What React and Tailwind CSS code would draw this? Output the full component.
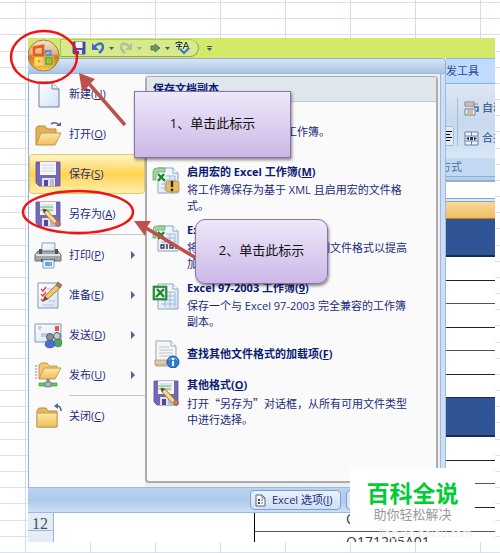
const sans = "font-['Open_Sans','Noto_Sans_CJK_SC',sans-serif]";

const Grid = () => (
  <div aria-hidden="true" className="absolute inset-0 overflow-hidden">
    <div className="absolute inset-0 flex flex-col">
      <div className="h-[3px] shrink-0 border-b border-[#dde0ed]" />
      {Array.from({ length: 34 }, (_, i) => (
        <div key={i} className="flex-1 border-b border-[#dde0ed]" />
      ))}
    </div>
    <div className="absolute inset-0 flex">
      <div className="w-[26px] shrink-0 border-r border-[#d5dceb]" />
      {Array.from({ length: 8 }, (_, i) => (
        <div key={i} className="w-[65px] shrink-0 border-r border-[#d5dceb]" />
      ))}
    </div>
  </div>
);

const Svg = ({ children, className = "size-7" }) => (
  <svg viewBox="0 0 28 28" aria-hidden="true" className={`shrink-0 ${className}`}>
    <defs>
      <linearGradient id="folder" x1="0" y1="0" x2="0" y2="1">
        <stop offset="0" stopColor="#fde9a4" />
        <stop offset="1" stopColor="#eebe5e" />
      </linearGradient>
      <linearGradient id="paper" x1="0" y1="0" x2="1" y2="1">
        <stop offset="0" stopColor="#ffffff" />
        <stop offset="1" stopColor="#d3e1f3" />
      </linearGradient>
    </defs>
    {children}
  </svg>
);

const Floppy = () => (
  <g>
    <path d="M2 2h24v24H5l-3-3z" fill="#7569b5" stroke="#5c4f9c" strokeWidth="0.8" />
    <path d="M6 2h16v13H6z" fill="#f4f5f9" />
    <path d="M8 5h12M8 8h12M8 11h12" stroke="#cfd3de" />
    <path d="M8 18h13v8H8z" fill="#dfe2ef" />
    <path d="M10 20h4v6h-4z" fill="#5347a0" />
    <path d="M16 19h4v7h-4z" fill="#b9bdd6" />
  </g>
);

const Pencil = () => (
  <g>
    <path d="M9 9l4 1 12 13-3 3L10 13z" fill="#f5cf6d" stroke="#8b6b34" strokeWidth="0.8" />
    <path d="M9 9l4 1-3 3z" fill="#4b4336" />
    <path d="M12 12l11 12" stroke="#fff0b5" strokeWidth="1" />
    <path d="M21 23l3-3 3 4-3 3z" fill="#c9776b" stroke="#7c625a" strokeWidth="0.6" />
  </g>
);

const Sheet = () => (
  <g>
    <path d="M6 2h15l5 5v20H6z" fill="url(#paper)" stroke="#8da3c2" />
    <path d="M21 2v5h5" fill="#fff" stroke="#8da3c2" />
    <path d="M12 10h11M9 14h14M9 18h14M9 22h14M13 10v15M18 10v15M23 10v15" fill="none" stroke="#9fb9dd" />
  </g>
);

const XBox = ({ open }) => (
  <g>
    <path
      d={open ? "M1 14V6q0-4 4-4h8v4H6q-2 0-2 3v5z" : "M1 4h14v14H1z"}
      fill={open ? "#a5d6a2" : "#319a43"}
      stroke={open ? "#4d9f58" : "#27803a"}
      strokeWidth="0.7"
    />
    <path d={open ? "M5 7h9v9H5z" : "M3 6h10v10H3z"} fill="#e9f6e8" />
    <path d={open ? "M6 8l7 7M12 8l-6 7" : "M5 7l7 8M12 7l-8 8"} stroke="#248237" strokeWidth="2.4" />
  </g>
);

const icons = {
  new: (
    <Svg>
      <path d="M5 2h13l7 7v18H5z" fill="url(#paper)" stroke="#71819c" />
      <path d="M18 2v7h7" fill="#e6edf8" stroke="#71819c" />
    </Svg>
  ),
  open: (
    <Svg>
      <path d="M2 25V8l2-2h7l2 3h9v5" fill="#e2b25a" stroke="#b9893b" />
      <path d="M2 25l5-12h20l-6 12z" fill="url(#folder)" stroke="#c4974b" />
      <path d="M17 4q5-3 8 1" fill="none" stroke="#526a8e" strokeWidth="1.6" />
      <path d="M22 6h5V2z" fill="#526a8e" />
    </Svg>
  ),
  save: <Svg><Floppy /></Svg>,
  saveAs: (
    <Svg>
      <Floppy />
      <path d="M6 7h13M6 10h13" stroke="#57c267" />
      <Pencil />
    </Svg>
  ),
  print: (
    <Svg>
      <path d="M8 2h13v10H8z" fill="url(#paper)" stroke="#8c9bb3" />
      <path d="M4 10h20l3 4v6H1v-6z" fill="#a3a6ab" stroke="#6e7177" />
      <path d="M5 8h3v5H5zM21 8h3v5h-3z" fill="#4e5259" />
      <path d="M2 14h24" stroke="#e0e1e3" strokeWidth="2" />
      <path d="M7 18h14v3H7z" fill="#4f5660" />
      <path d="M9 19h11v8H9z" fill="#f2f7fe" stroke="#78a3d6" />
      <path d="M11 25v-4h7v4z" fill="#65a2e3" />
      <circle cx="16" cy="23" r="1" fill="#f2ac53" />
      <circle cx="23" cy="17" r="1" fill="#60c75d" />
    </Svg>
  ),
  prepare: (
    <Svg>
      <path d="M4 2h20v25H4z" fill="url(#paper)" stroke="#8597b3" />
      <path d="M7 8l2 2 3-4M7 13l2 2 3-4M7 18l2 2 3-4" fill="none" stroke="#e14950" strokeWidth="1.5" />
      <path d="M13 8h7M13 13h4M14 20h7M8 24h12" stroke="#b9c6da" />
      <path d="M9 20l2-5L22 4l4 3-12 11z" fill="#f2c65f" stroke="#8c6b38" strokeWidth="0.8" />
      <path d="M9 20l2-5 3 3z" fill="#5b4c3a" />
      <path d="M22 4l2-3 4 3-2 3z" fill="#c96d60" stroke="#537454" strokeWidth="0.7" />
    </Svg>
  ),
  send: (
    <Svg>
      <path d="M1 3h26v18H1z" fill="url(#paper)" stroke="#7e96bb" />
      <path d="M4 6h4M4 8h3M7 13h8M7 15h6" stroke="#90a9d3" />
      <path d="M21 5h4v5h-4z" fill="#e75a38" />
      <path d="M19 23q0-5 5-5t4 5q-1 3-4 3t-5-3" fill="#4fa856" stroke="#357a3c" strokeWidth="0.6" />
      <circle cx="23" cy="15" r="3.5" fill="#c7cbd0" stroke="#555b65" />
      <path d="M11 24q0-5 5-5t5 5q-1 3-5 3t-5-3" fill="#4a6fd4" stroke="#3252a5" strokeWidth="0.6" />
      <circle cx="16" cy="16" r="3.5" fill="#8b929b" stroke="#555b65" />
    </Svg>
  ),
  publish: (
    <Svg>
      <path d="M5 18V4l2-2h6l2 3h8v4" fill="#f1ca73" stroke="#c6984b" />
      <path d="M5 18l5-11h17l-6 11z" fill="url(#folder)" stroke="#c4974b" />
      <path d="M1 5h2M1 8h2M1 11h2M1 14h2M1 17h2" stroke="#738bb0" />
      <path d="M14 18v5" stroke="#7b8691" strokeWidth="3" />
      <path d="M5 22h18v3H5z" fill="#62c758" stroke="#3b9545" strokeWidth="0.7" />
      <path d="M11 21h6v5h-6z" fill="#a9b2ba" stroke="#68717b" strokeWidth="0.7" />
    </Svg>
  ),
  close: (
    <Svg>
      <path d="M3 25V9l2-3h7l2 3h9v16z" fill="#e6b75c" stroke="#be9044" />
      <path d="M3 11h20v14H3z" fill="url(#folder)" stroke="#c89b4e" />
      <path d="M23 4q4 0 4 5" fill="none" stroke="#526a8e" strokeWidth="1.6" />
      <path d="M24 1v6l-4-3z" fill="#526a8e" />
    </Svg>
  ),
  workbook: <Svg><Sheet /><XBox /></Svg>,
  macro: (
    <Svg>
      <Sheet />
      <XBox open />
      <path d="M14 16q7-3 13 0v9q-6 3-13 0z" fill="#e8bc62" stroke="#b98a3d" strokeWidth="0.7" />
      <path d="M20 15v6" stroke="#2f2a20" strokeWidth="2.4" />
      <circle cx="20" cy="24" r="1.4" fill="#2f2a20" />
    </Svg>
  ),
  binary: (
    <Svg>
      <Sheet />
      <XBox open />
      <path d="M8 20h18v6H8z" fill="#eef2f8" />
      <path d="M9 21h3v3H9zM18 21h3v3h-3z" fill="none" stroke="#2e3b54" strokeWidth="1.3" />
      <path d="M15 20v5M24 20v5" stroke="#2e3b54" strokeWidth="1.5" />
    </Svg>
  ),
  addin: (
    <Svg>
      <path d="M4 1h15l5 5v20H4z" fill="#f5f6f8" stroke="#9ba3ae" />
      <path d="M19 1v5h5" fill="#fff" stroke="#9ba3ae" />
      <path d="M7 7h10M7 10h14M7 13h14M7 16h14" stroke="#bcc2ca" />
      <path d="M3 20h12v5H3z" fill="#dccba4" stroke="#a99670" strokeWidth="0.8" />
      <circle cx="21" cy="22" r="6" fill="#2a7dd1" stroke="#185a9f" />
      <path d="M16.5 20q4-4 9 0" fill="none" stroke="#75b7ef" />
      <circle cx="21" cy="19" r="1.3" fill="#fff" />
      <path d="M21 21v5" stroke="#fff" strokeWidth="2" />
    </Svg>
  ),
};

const menu = [
  { icon: "new", label: "新建", k: "N" },
  { icon: "open", label: "打开", k: "O" },
  { icon: "save", label: "保存", k: "S", active: true },
  { icon: "saveAs", label: "另存为", k: "A" },
  { icon: "print", label: "打印", k: "P", sub: true, line: true },
  { icon: "prepare", label: "准备", k: "E", sub: true },
  { icon: "send", label: "发送", k: "D", sub: true },
  { icon: "publish", label: "发布", k: "U", sub: true },
  { icon: "close", label: "关闭", k: "C", line: true },
];

const formats = [
  { icon: "workbook", title: "Excel 工作簿", k: "X", text: "按默认文件格式保存工作簿。" },
  { icon: "macro", title: "启用宏的 Excel 工作簿", k: "M", text: "将工作簿保存为基于 XML 且启用宏的文件格\n式。" },
  { icon: "binary", title: "Excel 二进制工作簿", k: "B", text: "将工作簿保存为优化的二进制文件格式以提高\n加载和保存速度。" },
  { icon: "workbook", title: "Excel 97-2003 工作簿", k: "9", text: "保存一个与 Excel 97-2003 完全兼容的工作簿\n副本。" },
  { icon: "addin", title: "查找其他文件格式的加载项", k: "F" },
  { icon: "saveAs", title: "其他格式", k: "O", text: "打开“另存为”对话框，从所有可用文件类型\n中进行选择。", cjk: true },
];

const Key = ({ k }) => (
  <>
    (<span className="underline">{k}</span>)
  </>
);

const Caret = ({ faded }) => (
  <svg viewBox="0 0 5 3" aria-hidden="true" className={`w-[5px] shrink-0 ${faded ? "opacity-40" : ""}`}>
    <path d="M0 0h5L2.5 3z" fill="#3c5a78" />
  </svg>
);

const TitleBar = () => (
  <header className="flex h-5 items-center bg-[#d3e968] pl-8">
    <div className="flex h-[18px] items-center gap-[5px] rounded-r-full rounded-bl-[14px] border border-t-[#b5c86a] border-r-[#8ca454] border-b-[#8ca454] border-l-[#a9bd68] bg-[#d9e98e] pr-2 pl-[11px]">
      <button aria-label="保存">
        <svg viewBox="0 0 14 14" className="size-3.5">
          <path d="M1 1h12v12H2l-1-1z" fill="#4a4fae" stroke="#34388c" strokeWidth="0.8" />
          <path d="M3.5 1h7v6h-7z" fill="#f4f6fb" />
          <path d="M4 9h6v4H4z" fill="#dfe2ef" />
          <path d="M5 10h2v3H5z" fill="#34388c" />
        </svg>
      </button>
      <button aria-label="撤消" className="flex items-center gap-1">
        <svg viewBox="0 0 14 14" className="size-3.5">
          <path d="M3 6q8-7 9 0 0 3-4 6" fill="none" stroke="#3d6fc6" strokeWidth="2.4" />
          <path d="M1 2v7h7z" fill="#3d6fc6" />
        </svg>
        <Caret />
      </button>
      <button aria-label="恢复" className="flex items-center gap-1">
        <svg viewBox="0 0 14 14" className="size-3.5 opacity-60">
          <path d="M11 6q-8-7-9 0 0 3 4 6" fill="none" stroke="#93a9a0" strokeWidth="2.4" />
          <path d="M13 2v7H6z" fill="#93a9a0" />
        </svg>
        <Caret faded />
      </button>
      <button aria-label="下一步" className="flex items-center gap-1">
        <svg viewBox="0 0 14 14" className="size-3.5">
          <path d="M4 5h4V3l5 4-5 4V9H4z" fill="#6f9a5c" stroke="#3f6b3b" strokeWidth="0.8" />
        </svg>
        <Caret />
      </button>
      <button aria-label="拼写检查">
        <svg viewBox="0 0 15 14" className="h-3.5 w-[15px]">
          <path d="M1 3V1.5h6V3M4 0v1M2.5 3.5h3L4 5v3H3M1 5.5h6M8 8l3-7 3 7M9 5.5h4" fill="none" stroke="#26334d" />
          <path d="M5 8l4 4 5-5" fill="none" stroke="#3973cf" strokeWidth="2" />
        </svg>
      </button>
    </div>
    <button aria-label="自定义快速访问工具栏" className="ml-2 flex flex-col items-center gap-px">
      <span className="h-px w-[5px] bg-[#33516f]" />
      <Caret />
    </button>
  </header>
);

const OfficeButton = () => (
  <button aria-label="Office 按钮" className="absolute top-px left-0 h-[33px] w-8 overflow-hidden">
    <svg viewBox="0 0 32 33" className="h-full w-full">
      <defs>
        <linearGradient id="orb" x1="0" y1="0" x2="0" y2="1">
          <stop offset="0" stopColor="#f0e6d2" />
          <stop offset="0.45" stopColor="#dfb27a" />
          <stop offset="0.52" stopColor="#cf7a22" />
          <stop offset="0.8" stopColor="#ee9a26" />
          <stop offset="1" stopColor="#ffdc62" />
        </linearGradient>
      </defs>
      <circle cx="15.5" cy="16.5" r="15.5" fill="url(#orb)" stroke="#a2793b" />
      <g fill="none" stroke="#fff3dc" strokeWidth="3.6" opacity="0.55">
        <path d="M6 8.5l9-1.500v9H6z" />
        <path d="M8 19.500h6v5.500H8zM18 19h6v6h-6z" />
      </g>
      <g fill="none" strokeWidth="2.4">
        <path d="M6 8.5l9-1.500v9H6z" stroke="#ea5a14" strokeWidth="2.8" />
        <path d="M17.500 15v-3h5v4h-4" stroke="#4f93d6" strokeWidth="2" />
        <path d="M14.500 19.500H8.500v5.500h6" stroke="#ffdc4a" />
        <path d="M18 19h6v6h-6z" stroke="#6fb52c" />
      </g>
    </svg>
  </button>
);

const MenuList = () => (
  <nav className="w-[117px] shrink-0 border-l border-[#8fb0dc] bg-[#fafafa]">
    {menu.map((m) => (
      <div key={m.icon}>
        {m.line && <div className="ml-10 h-px bg-[#c5c7c9]" />}
        <button
          className={`flex h-10 w-full items-center text-left text-[11px] text-[#1c2b7c] ${
            m.active
              ? "rounded-sm border border-[#e8c766] bg-linear-to-b from-[#fff4c2] via-[#ffd34d] to-[#ffefaa] pl-1"
              : "pl-[5px]"
          }`}
        >
          {icons[m.icon]}
          <span className="ml-[7px] flex-1 whitespace-nowrap">
            {m.label}
            <Key k={m.k} />
          </span>
          {m.sub && (
            <svg viewBox="0 0 4 8" className="mr-2.5 h-2 w-1">
              <path d="M0 0l4 4-4 4z" fill="#4862a8" />
            </svg>
          )}
        </button>
      </div>
    ))}
  </nav>
);

const FormatPanel = () => (
  <section className="mt-0.5 mb-1 min-w-0 flex-1 rounded-sm border-2 border-t border-[#adadad] bg-[#fafafa] text-[11px] leading-4 text-[#1c2b7c]">
    <h2 className="h-[25px] border-b border-[#c5c9cc] bg-[#dde7ec] pl-1.5 leading-6 font-bold text-[#0c1a74]">
      保存文档副本
    </h2>
    <ul className="pt-1 pb-[46px]">
      {formats.map((f) => (
        <li key={f.title}>
          <button className={`flex w-full items-start gap-[7px] pl-[5px] text-left ${f.text ? "h-[58px]" : "h-[39px]"}`}>
            <span className="pt-0.5">{icons[f.icon]}</span>
            <span className={`min-w-0 flex-1 ${f.text ? "" : "pt-2"}`}>
              <span className="block font-bold whitespace-nowrap text-[#0c1a74]">
                {f.title}
                <Key k={f.k} />
              </span>
              {f.text && (
                <span className={`mt-0.5 block whitespace-pre ${f.cjk ? "font-['Noto_Sans_CJK_SC',sans-serif]" : ""}`}>
                  {f.text}
                </span>
              )}
            </span>
          </button>
        </li>
      ))}
    </ul>
  </section>
);

const OfficeMenu = () => (
  <div className="flex min-w-0 flex-1 flex-col">
    <div className="h-[15px] rounded-tr-sm border-t border-r border-[#96abc9] bg-linear-to-b from-[#d8e5f5] to-[#a9c3e6]" />
    <div className="flex border-t border-r border-[#9db9df] bg-[#cfdff3]">
      <div className="flex min-w-0 flex-1 border-r border-[#9db9df] bg-[#eceef0]">
        <MenuList />
        <FormatPanel />
        <div className="w-0.5" />
      </div>
      <div className="w-1" />
    </div>
    <footer className="flex h-[26px] items-center gap-[5px] border-t border-r border-b border-[#9db9df] bg-linear-to-b from-[#bcd2ef] via-[#adc9ec] to-[#cde0f6] pl-[222px]">
      <button className="flex h-5 w-[91px] shrink-0 items-center gap-1.5 rounded-sm border border-[#7fa0cf] bg-linear-to-b from-[#e9f1fb] to-[#cfe0f5] pl-1 text-[11px] whitespace-nowrap text-[#1c2b7c]">
        <svg viewBox="0 0 11 13" aria-hidden="true" className="h-[13px] w-[11px] shrink-0">
          <path d="M1 1h6l3 3v8H1z" fill="#f8fafc" stroke="#5b6674" />
          <path d="M3 5h2v2H3zM3 8h2v2H3z" fill="#454e59" />
          <path d="M6 6h2M6 9h2M7 1v3h3" fill="none" stroke="#6c7784" />
        </svg>
        <span>Excel 选项<Key k="I" /></span>
      </button>
      <button aria-label="退出 Excel" className="h-5 min-w-0 flex-1 rounded-sm border border-[#7fa0cf] bg-[#dce8f8]" />
    </footer>
  </div>
);

const Ribbon = () => (
  <div className="w-[49px] shrink-0 overflow-hidden bg-white text-[11px] text-[#2a4a8c]">
    <div className="flex h-[26px] items-center justify-start border-t border-b border-[#8fb4e4] bg-[#bfdbff] whitespace-nowrap">
      <button>发工具</button>
    </div>
    <div className="flex h-[74px] border-t-2 border-[#dbe8f7] bg-linear-to-b from-[#dce6f4] via-[#c8d9ed] to-[#d8e7f6]">
      <div className="mt-3 mb-3 flex w-3 shrink-0 items-end border-r border-[#a4bcdb]">
        <button aria-label="对齐" className="flex h-5 w-2 flex-col justify-center gap-0.5 rounded-r-xs border border-l-0 border-[#9dbbe2] bg-[#e1ebf7]">
          <span className="h-px w-1.5 bg-black" />
          <span className="h-px w-1 bg-black" />
          <span className="h-px w-1.5 bg-black" />
          <span className="h-px w-1 bg-black" />
        </button>
      </div>
      <div className="flex flex-col gap-3.5 pt-3.5 pl-1.5 whitespace-nowrap">
        <button className="flex h-4 items-center gap-[3px]">
          <svg viewBox="0 0 15 15" className="size-[15px] shrink-0">
            <path d="M1 1h9v4H1zM1 8h10v6H1z" fill="#f6efdf" stroke="#6881a5" />
            <path d="M1 3h13M3 10h6M3 12h6" stroke="#c28143" />
            <path d="M10 6h4v4h-2" fill="none" stroke="#466393" strokeWidth="1.5" />
          </svg>
          自动
        </button>
        <button className="flex h-4 items-center gap-[3px]">
          <svg viewBox="0 0 15 15" className="size-[15px] shrink-0">
            <path d="M1 1h13v13H1zM1 5h13M1 10h13M7.5 1v4M7.5 10v4" fill="#edf3fa" stroke="#6881a5" />
            <path d="M2 7.5l3-2v4zM13 7.5l-3-2v4z" fill="#253e66" />
            <path d="M6 6h3v3H6z" fill="#333" />
          </svg>
          合并
        </button>
      </div>
    </div>
    <div className="flex h-[18px] w-4 min-w-full justify-start bg-[#c2d9f1] leading-[18px] text-[#4c6fa8]">
      <div className="flex w-4 justify-end whitespace-nowrap">方式</div>
    </div>
    <div className="h-1.5 border-t border-b-2 border-[#8fb0d2] bg-[#b8cfea]" />
    <div className="h-4 bg-white" />
    <div className="h-1 border-t border-b border-[#86a6c8] bg-[#dce8f5]" />
    <div className="h-[17px] border-b border-[#c07a35] bg-linear-to-b from-[#f8d89c] to-[#f2bd5b]" />
    <div className="h-[38px] border-b-2 border-[#1c2c4d] bg-[#2f5597]" />
    {[0, 1, 2, 3, 4].map((i) => (
      <div key={i} className={`border-b ${i % 2 ? "h-[23px] border-[#555]" : "h-6 border-[#222]"}`} />
    ))}
    <div className="h-[22px]" />
    <div className="h-10 border-t border-b-2 border-[#1c2c4d] bg-[#2f5597]" />
    <div className="h-6 border-b border-[#222]" />
    <div className="h-[23px] border-b border-[#555]" />
    <div className="h-6 border-b border-[#222]" />
  </div>
);

const SheetBottom = () => (
  <div className="flex h-[29px] overflow-hidden bg-white">
    <div className="w-[26px] shrink-0 border-r border-[#9cb6d4] bg-[#e3ecf7] text-[#3c5560]">
      <div className="h-[18px] border-b border-[#9cb6d4] pl-1 font-['Liberation_Serif',serif] text-[16px] leading-[22px]">12</div>
    </div>
    <div className="w-[200px] shrink-0" />
    <div className="min-w-0 flex-1 border-l border-black text-[14px] text-[#333]">
      <div className="h-[19px] border-b border-[#555] pl-[91px] leading-3">Q</div>
      <div className="pl-[91px] leading-5">Q171205A01</div>
    </div>
  </div>
);

const Callout = ({ children, className }) => (
  <div
    className={`absolute flex items-center justify-center border border-[#8a70ad] bg-linear-to-b from-[#eee8f8] to-[#ccb8e8] pb-0.5 text-[13px] whitespace-nowrap text-[#111] shadow-[1px_2px_3px_rgba(0,0,0,0.45)] ${className}`}
  >
    {children}
  </div>
);

const Marks = () => (
  <svg viewBox="0 0 240 280" aria-hidden="true" className="pointer-events-none absolute top-0 left-0 h-[280px] w-[240px]">
    <g fill="none" stroke="#f01414" strokeWidth="2.5">
      <ellipse cx="44" cy="57" rx="33" ry="26" />
      <ellipse cx="78" cy="212" rx="55" ry="21" />
    </g>
    <g fill="#c0504d" stroke="#c0504d">
      <path d="M125 125L84 78M196 258L141 225" strokeWidth="3.5" />
      <path d="M79 73l16 6-5 5-4 5-4 2zM134 221l17 0-4 6-2 9z" stroke="none" />
    </g>
  </svg>
);

export default function App() {
  return (
    <main className={`relative min-h-screen overflow-hidden bg-white pt-[38px] pr-[5px] pb-[11px] pl-7 ${sans}`}>
      <Grid />
      <div className="relative">
        <TitleBar />
        <div className="flex">
          <OfficeMenu />
          <Ribbon />
        </div>
        <SheetBottom />
        <OfficeButton />
      </div>
      <Marks />
      <Callout className="top-[91px] left-[134px] h-[67px] w-[157px]">1、单击此标示</Callout>
      <Callout className="top-[219px] left-[195px] h-[65px] w-[133px] rounded-[10px]">2、单击此标示</Callout>
      <div className="absolute right-[25px] bottom-[23px] flex h-[62px] w-[125px] flex-col items-center bg-white pt-3 font-['Noto_Sans_CJK_SC',sans-serif]">
        <strong className="text-[23px] leading-6 text-[#00cc33]">百科全说</strong>
        <span className="text-[13px] leading-5 text-[#999]">助你轻松解决</span>
      </div>
      <span className="absolute right-7 bottom-3 text-[11px] leading-4 text-[#eeeeee]">jingyan.baidu.com</span>
    </main>
  );
}
